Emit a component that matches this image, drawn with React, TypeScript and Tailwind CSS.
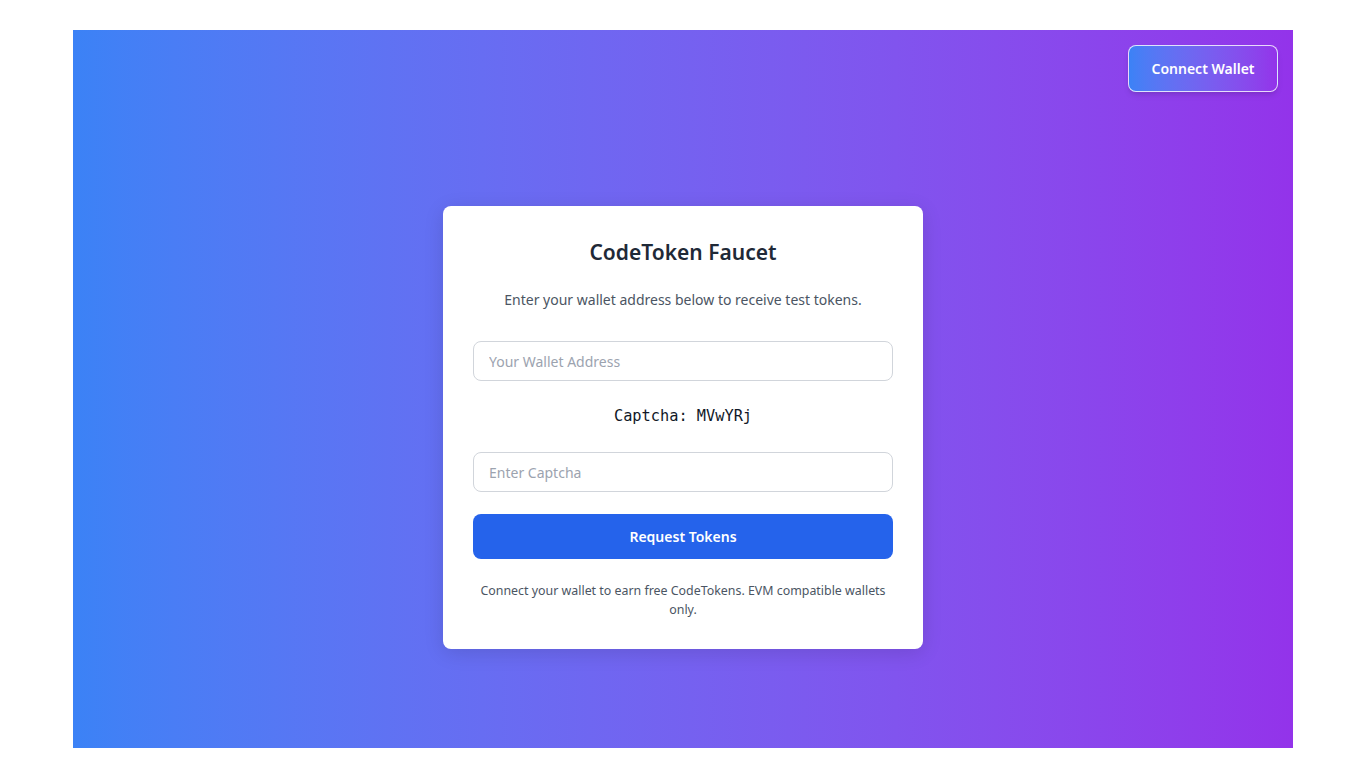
import { useState } from 'react';

// Faucet page
export default function App() {
  const [wallet, setWallet] = useState('');
  const [captcha, setCaptcha] = useState('');

  return (
    <div className="min-h-screen bg-white px-[73px] py-[30px] font-['Noto_Sans',sans-serif]">
      <div className="h-[718px] flex flex-col bg-gradient-to-r from-[#3b82f6] to-[#9333ea]">
        {/* Header */}
        <div className="flex justify-end p-[15px]">
          <button className="h-[47px] w-[150px] rounded-lg border border-white/80 bg-gradient-to-r from-[#3b82f6] to-[#9333ea] text-[14px] font-semibold text-white shadow-md">
            Connect Wallet
          </button>
        </div>

        {/* Card */}
        <div className="flex-1 flex items-center justify-center">
          <div className="w-[480px] rounded-lg bg-white p-[30px] text-center shadow-[0_4px_20px_rgba(0,0,0,0.12)]">
            <h1 className="text-[21px] leading-8 font-semibold text-[#1f2937]">CodeToken Faucet</h1>
            <p className="mt-5 text-[14px] leading-6 text-[#4b5563]">
              Enter your wallet address below to receive test tokens.
            </p>
            <input
              type="text"
              placeholder="Your Wallet Address"
              value={wallet}
              onChange={(e) => setWallet(e.target.value)}
              className="mt-[29px] block h-10 w-full rounded-lg border border-[#d1d5db] px-[15px] text-[14px] text-gray-800 placeholder:text-[#9ca3af] focus:outline-none"
            />
            <div className="mt-[23px] font-['DejaVu_Sans_Mono',monospace] text-[15.3px] leading-6 text-[#111827]">
              Captcha: MVwYRj
            </div>
            <input
              type="text"
              placeholder="Enter Captcha"
              value={captcha}
              onChange={(e) => setCaptcha(e.target.value)}
              className="mt-6 block h-10 w-full rounded-lg border border-[#d1d5db] px-[15px] text-[14px] text-gray-800 placeholder:text-[#9ca3af] focus:outline-none"
            />
            <button className="mt-[22px] h-[45px] w-full rounded-lg bg-[#2563eb] text-[14px] font-semibold text-white">
              Request Tokens
            </button>
            <p className="mt-[22px] px-1 text-[12.4px] leading-[19px] text-[#4b5563]">
              Connect your wallet to earn free CodeTokens. EVM compatible wallets only.
            </p>
          </div>
        </div>
      </div>
    </div>
  );
}
